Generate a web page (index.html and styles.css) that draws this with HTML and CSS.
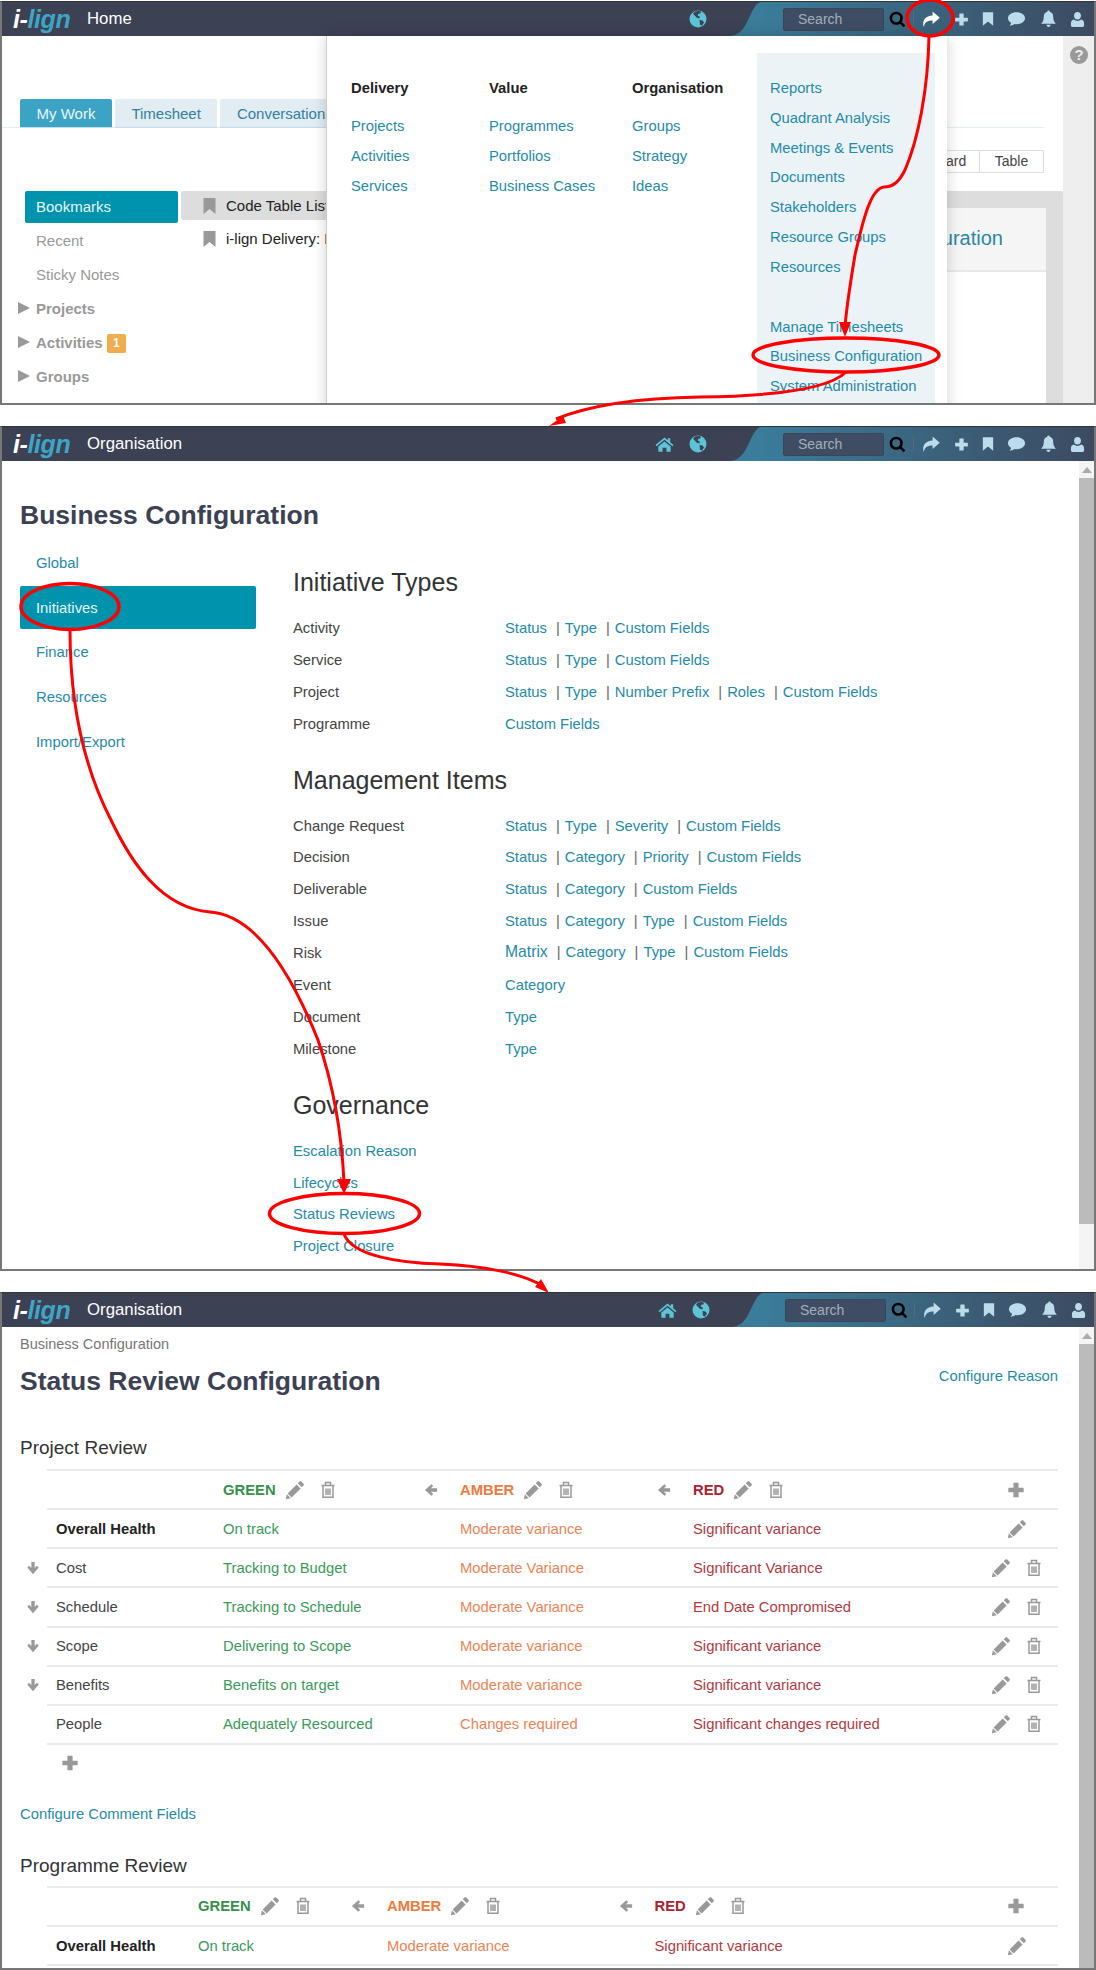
FILE: index.html
```html
<!DOCTYPE html>
<html lang="en">
<head>
  <meta charset="UTF-8">
  <meta name="viewport" content="width=device-width, initial-scale=1.0">
  <title>i-lign Status Review Configuration</title>
  <link rel="stylesheet" href="styles.css">
</head>
<body>
  <svg class="icon-defs" aria-hidden="true">
    <symbol id="i-pencil" viewBox="0 0 16 16"><path d="M11.600 1.200c.4-.4 1-.4 1.400 0l1.800 1.800c.4.4.4 1 0 1.400L13.400 5.800 10.200 2.600zM9.300 3.500l3.200 3.200-7.200 7.200-3.200-3.200zM1.500 11.400l3.100 3.100-3.900.8z"/></symbol>
    <symbol id="i-trash" viewBox="0 0 16 18"><path fill="none" stroke="currentColor" stroke-width="1.500" d="M1.500 4.500h13M5.500 4.500V1.500h5v3M3 4.500V16.300h10V4.500M6 7.500v6.500M8 7.500v6.500M10 7.500v6.500"/></symbol>
    <symbol id="i-left" viewBox="0 0 16 16"><path d="M8.500 1.500 1 8l7.500 6.500 2-2-2.600-2.600H15V6.100H7.900l2.600-2.600z"/></symbol>
    <symbol id="i-down" viewBox="0 0 16 16"><path d="M1.500 7.500 8 15l6.500-7.500-2-2-2.600 2.600V1H6.100v7.100L3.500 5.500z"/></symbol>
    <symbol id="i-plus" viewBox="0 0 16 16"><path d="M6.200 1.500h3.600c.3 0 .5.2.5.5v4h4c.3 0 .5.2.5.5v3c0 .3-.2.500-.5.500h-4v4c0 .3-.2.500-.5.500H6.200c-.3 0-.5-.2-.5-.5v-4h-4c-.3 0-.5-.2-.5-.5v-3c0-.3.2-.5.500-.5h4V2c0-.3.2-.5.500-.5z"/></symbol>
    <symbol id="i-share" viewBox="0 0 18 16"><path d="M11 .5l6.800 5.800L11 12.300V8.900c-4.500 0-7.200 1-8.500 6.300C.7 8.700 4.500 4.300 11 4.100z"/></symbol>
    <symbol id="i-bookmark" viewBox="0 0 14 18"><path d="M1 1h12v16l-6-5-6 5z"/></symbol>
    <symbol id="i-comment" viewBox="0 0 20 16"><path d="M10 1c5 0 9 2.700 9 6.200s-4 6.200-9 6.200c-.8 0-1.500-.1-2.200-.2C6.300 14.400 4.500 15 2.800 15c.8-.9 1.400-1.800 1.500-3C2.300 10.900 1 9.200 1 7.200 1 3.700 5 1 10 1z"/></symbol>
    <symbol id="i-bell" viewBox="0 0 18 18"><path d="M9 0c.8 0 1.300.6 1.300 1.300 2.500.6 3.700 2.600 3.700 5.400 0 4 1.200 5.500 2.800 7.300H1.200C2.800 12.200 4 10.700 4 6.700c0-2.800 1.200-4.800 3.700-5.400C7.700.6 8.200 0 9 0zM6.800 15h4.400c0 1.300-1 2.400-2.200 2.400S6.800 16.300 6.800 15z"/></symbol>
    <symbol id="i-user" viewBox="0 0 16 18"><path d="M8 1c2.200 0 3.700 1.700 3.700 3.900S10.200 9 8 9 4.300 7.100 4.300 4.900 5.800 1 8 1zM4.200 9c1 .9 2.300 1.500 3.800 1.500S10.800 9.900 11.800 9c2 .3 3.200 1.600 3.200 4v2.500c0 .8-.6 1.500-1.500 1.500h-11c-.9 0-1.500-.7-1.500-1.500V13c0-2.400 1.200-3.700 3.200-4z"/></symbol>
    <symbol id="i-home" viewBox="0 0 20 17"><path d="M10 1l3.500 3V2h2.500v4.200L19.500 9l-1.200 1.300L10 3.500 1.700 10.300.5 9zM10 5.300l6.500 5.400V16h-4.500v-4H8v4H3.500v-5.300z"/></symbol>
    <symbol id="i-globe" viewBox="0 0 18 18"><circle cx="9" cy="9" r="8.500" fill="#5cc4d6"/><path fill="#3c4154" d="M6 1.500c2-.9 5-.8 6 .3l-.7 1.700-2 .2-.6 1.800 2.200 1.300-.6 1.700-2.400-.8-2.300-2.300L4 3.500zM10.500 10l3 .5 1.500 2-2 3-2-.8z"/></symbol>
    <symbol id="i-search" viewBox="0 0 16 16"><path fill="none" stroke="currentColor" stroke-width="2.400" d="M6.800 1.800a5 5 0 1 0 0 10 5 5 0 0 0 0-10zM10.500 10.500l4 4"/></symbol>
  </svg>

  <!-- Step 1: home page with the go-to menu open -->
  <section class="shot shot-home">
    <header class="nav">
      <a class="logo" href="#"><span class="logo-i">i-</span><span class="logo-lign">lign</span></a>
      <span class="nav-title">Home</span>
      <svg class="nav-link"><use href="#i-globe"/></svg>
      <svg class="nav-curve" viewBox="0 0 33 34" preserveAspectRatio="none"><path d="M0 34c12 0 16-8 20-16S28 0 33 0v34z"/></svg>
      <div class="nav-tools">
        <div class="search-box">Search</div>
        <svg class="search-icon"><use href="#i-search"/></svg>
        <span class="nav-sep"></span>
        <svg class="tool tool-share tool-current"><use href="#i-share"/></svg>
        <svg class="tool tool-plus"><use href="#i-plus"/></svg>
        <svg class="tool tool-bookmark"><use href="#i-bookmark"/></svg>
        <svg class="tool tool-comment"><use href="#i-comment"/></svg>
        <svg class="tool tool-bell"><use href="#i-bell"/></svg>
        <svg class="tool tool-user"><use href="#i-user"/></svg>
      </div>
    </header>
    <div class="home-body">
      <div class="home-main">
        <div class="tabs">
          <a class="tab tab-active" href="#">My Work</a>
          <a class="tab" href="#">Timesheet</a>
          <a class="tab" href="#">Conversations</a>
        </div>
        <div class="view-switch">
          <a class="view-btn" href="#">Board</a>
          <a class="view-btn" href="#">Table</a>
        </div>
        <div class="home-board">
          <nav class="home-side">
            <a class="home-side-item home-side-active" href="#">Bookmarks</a>
            <a class="home-side-item" href="#">Recent</a>
            <a class="home-side-item" href="#">Sticky Notes</a>
            <a class="home-side-item home-side-group" href="#">Projects</a>
            <a class="home-side-item home-side-group" href="#">Activities <span class="badge">1</span></a>
            <a class="home-side-item home-side-group" href="#">Groups</a>
          </nav>
          <div class="bookmarks">
            <div class="bookmark bookmark-active"><svg class="bookmark-icon"><use href="#i-bookmark"/></svg>Code Table List</div>
            <div class="bookmark"><svg class="bookmark-icon"><use href="#i-bookmark"/></svg>i-lign Delivery: New</div>
          </div>
          <div class="card">
            <div class="card-head">Business Configuration</div>
          </div>
        </div>
      </div>
      <aside class="help-strip"><span class="help">?</span></aside>
    </div>

    <div class="menu">
      <div class="menu-col menu-col-delivery">
        <h4>Delivery</h4>
        <a href="#">Projects</a>
        <a href="#">Activities</a>
        <a href="#">Services</a>
      </div>
      <div class="menu-col menu-col-value">
        <h4>Value</h4>
        <a href="#">Programmes</a>
        <a href="#">Portfolios</a>
        <a href="#">Business Cases</a>
      </div>
      <div class="menu-col menu-col-org">
        <h4>Organisation</h4>
        <a href="#">Groups</a>
        <a href="#">Strategy</a>
        <a href="#">Ideas</a>
      </div>
      <div class="menu-extra">
        <a href="#">Reports</a>
        <a href="#">Quadrant Analysis</a>
        <a href="#">Meetings &amp; Events</a>
        <a href="#">Documents</a>
        <a href="#">Stakeholders</a>
        <a href="#">Resource Groups</a>
        <a href="#">Resources</a>
        <a class="menu-extra-gap" href="#">Manage Timesheets</a>
        <a href="#">Business Configuration</a>
        <a href="#">System Administration</a>
      </div>
    </div>
  </section>

  <!-- Step 2: business configuration -->
  <section class="shot shot-config">
    <header class="nav">
      <a class="logo" href="#"><span class="logo-i">i-</span><span class="logo-lign">lign</span></a>
      <span class="nav-title">Organisation</span>
      <svg class="nav-link nav-home"><use href="#i-home"/></svg>
      <svg class="nav-link"><use href="#i-globe"/></svg>
      <svg class="nav-curve" viewBox="0 0 33 34" preserveAspectRatio="none"><path d="M0 34c12 0 16-8 20-16S28 0 33 0v34z"/></svg>
      <div class="nav-tools">
        <div class="search-box">Search</div>
        <svg class="search-icon"><use href="#i-search"/></svg>
        <span class="nav-sep"></span>
        <svg class="tool tool-share"><use href="#i-share"/></svg>
        <svg class="tool tool-plus"><use href="#i-plus"/></svg>
        <svg class="tool tool-bookmark"><use href="#i-bookmark"/></svg>
        <svg class="tool tool-comment"><use href="#i-comment"/></svg>
        <svg class="tool tool-bell"><use href="#i-bell"/></svg>
        <svg class="tool tool-user"><use href="#i-user"/></svg>
      </div>
    </header>
    <div class="page">
      <div class="page-main config-main">
        <h1>Business Configuration</h1>
        <div class="config-layout">
          <nav class="config-side">
            <a href="#">Global</a>
            <a class="config-side-active" href="#">Initiatives</a>
            <a href="#">Finance</a>
            <a href="#">Resources</a>
            <a href="#">Import/Export</a>
          </nav>
          <div class="config-content">
            <h2>Initiative Types</h2>
            <div class="type-row"><span class="type-name">Activity</span><span><a href="#">Status</a><span class="sep">|</span><a href="#">Type</a><span class="sep">|</span><a href="#">Custom Fields</a></span></div>
            <div class="type-row"><span class="type-name">Service</span><span><a href="#">Status</a><span class="sep">|</span><a href="#">Type</a><span class="sep">|</span><a href="#">Custom Fields</a></span></div>
            <div class="type-row"><span class="type-name">Project</span><span><a href="#">Status</a><span class="sep">|</span><a href="#">Type</a><span class="sep">|</span><a href="#">Number Prefix</a><span class="sep">|</span><a href="#">Roles</a><span class="sep">|</span><a href="#">Custom Fields</a></span></div>
            <div class="type-row"><span class="type-name">Programme</span><span><a href="#">Custom Fields</a></span></div>

            <h2>Management Items</h2>
            <div class="type-row"><span class="type-name">Change Request</span><span><a href="#">Status</a><span class="sep">|</span><a href="#">Type</a><span class="sep">|</span><a href="#">Severity</a><span class="sep">|</span><a href="#">Custom Fields</a></span></div>
            <div class="type-row"><span class="type-name">Decision</span><span><a href="#">Status</a><span class="sep">|</span><a href="#">Category</a><span class="sep">|</span><a href="#">Priority</a><span class="sep">|</span><a href="#">Custom Fields</a></span></div>
            <div class="type-row"><span class="type-name">Deliverable</span><span><a href="#">Status</a><span class="sep">|</span><a href="#">Category</a><span class="sep">|</span><a href="#">Custom Fields</a></span></div>
            <div class="type-row"><span class="type-name">Issue</span><span><a href="#">Status</a><span class="sep">|</span><a href="#">Category</a><span class="sep">|</span><a href="#">Type</a><span class="sep">|</span><a href="#">Custom Fields</a></span></div>
            <div class="type-row"><span class="type-name">Risk</span><span class="type-links-risk"><a class="matrix" href="#">Matrix</a><span class="sep">|</span><a href="#">Category</a><span class="sep">|</span><a href="#">Type</a><span class="sep">|</span><a href="#">Custom Fields</a></span></div>
            <div class="type-row"><span class="type-name">Event</span><span><a href="#">Category</a></span></div>
            <div class="type-row"><span class="type-name">Document</span><span><a href="#">Type</a></span></div>
            <div class="type-row"><span class="type-name">Milestone</span><span><a href="#">Type</a></span></div>

            <h2>Governance</h2>
            <div class="type-row"><a href="#">Escalation Reason</a></div>
            <div class="type-row"><a href="#">Lifecycles</a></div>
            <div class="type-row"><a href="#">Status Reviews</a></div>
            <div class="type-row"><a href="#">Project Closure</a></div>
          </div>
        </div>
      </div>
      <div class="scrollbar scrollbar-short"><span class="scroll-up"></span><span class="scroll-thumb"></span></div>
    </div>
  </section>

  <!-- Step 3: status review configuration -->
  <section class="shot shot-review">
    <header class="nav">
      <a class="logo" href="#"><span class="logo-i">i-</span><span class="logo-lign">lign</span></a>
      <span class="nav-title">Organisation</span>
      <svg class="nav-link nav-home"><use href="#i-home"/></svg>
      <svg class="nav-link"><use href="#i-globe"/></svg>
      <svg class="nav-curve" viewBox="0 0 33 34" preserveAspectRatio="none"><path d="M0 34c12 0 16-8 20-16S28 0 33 0v34z"/></svg>
      <div class="nav-tools">
        <div class="search-box">Search</div>
        <svg class="search-icon"><use href="#i-search"/></svg>
        <span class="nav-sep"></span>
        <svg class="tool tool-share"><use href="#i-share"/></svg>
        <svg class="tool tool-plus"><use href="#i-plus"/></svg>
        <svg class="tool tool-bookmark"><use href="#i-bookmark"/></svg>
        <svg class="tool tool-comment"><use href="#i-comment"/></svg>
        <svg class="tool tool-bell"><use href="#i-bell"/></svg>
        <svg class="tool tool-user"><use href="#i-user"/></svg>
      </div>
    </header>
    <div class="page">
      <div class="page-main review-main">
        <div class="breadcrumb">Business Configuration</div>
        <div class="review-head">
          <h1>Status Review Configuration</h1>
          <a href="#">Configure Reason</a>
        </div>

        <h3>Project Review</h3>
        <div class="review-table">
          <div class="review-row review-row-head">
            <span></span>
            <span class="head-cell green"><b>GREEN</b><svg class="ico pencil"><use href="#i-pencil"/></svg><svg class="ico trash"><use href="#i-trash"/></svg><svg class="ico arrow-left"><use href="#i-left"/></svg></span>
            <span class="head-cell amber"><b>AMBER</b><svg class="ico pencil"><use href="#i-pencil"/></svg><svg class="ico trash"><use href="#i-trash"/></svg><svg class="ico arrow-left"><use href="#i-left"/></svg></span>
            <span class="head-cell red"><b>RED</b><svg class="ico pencil"><use href="#i-pencil"/></svg><svg class="ico trash"><use href="#i-trash"/></svg></span>
            <span class="actions actions-single"><svg class="ico plus"><use href="#i-plus"/></svg></span>
          </div>
          <div class="review-row">
            <b class="row-name">Overall Health</b><span class="green">On track</span><span class="amber">Moderate variance</span><span class="red">Significant variance</span>
            <span class="actions actions-single"><svg class="ico pencil"><use href="#i-pencil"/></svg></span>
          </div>
          <div class="review-row">
            <span class="row-name"><svg class="ico arrow-down"><use href="#i-down"/></svg>Cost</span><span class="green">Tracking to Budget</span><span class="amber">Moderate Variance</span><span class="red">Significant Variance</span>
            <span class="actions"><svg class="ico pencil"><use href="#i-pencil"/></svg><svg class="ico trash"><use href="#i-trash"/></svg></span>
          </div>
          <div class="review-row">
            <span class="row-name"><svg class="ico arrow-down"><use href="#i-down"/></svg>Schedule</span><span class="green">Tracking to Schedule</span><span class="amber">Moderate Variance</span><span class="red">End Date Compromised</span>
            <span class="actions"><svg class="ico pencil"><use href="#i-pencil"/></svg><svg class="ico trash"><use href="#i-trash"/></svg></span>
          </div>
          <div class="review-row">
            <span class="row-name"><svg class="ico arrow-down"><use href="#i-down"/></svg>Scope</span><span class="green">Delivering to Scope</span><span class="amber">Moderate variance</span><span class="red">Significant variance</span>
            <span class="actions"><svg class="ico pencil"><use href="#i-pencil"/></svg><svg class="ico trash"><use href="#i-trash"/></svg></span>
          </div>
          <div class="review-row">
            <span class="row-name"><svg class="ico arrow-down"><use href="#i-down"/></svg>Benefits</span><span class="green">Benefits on target</span><span class="amber">Moderate variance</span><span class="red">Significant variance</span>
            <span class="actions"><svg class="ico pencil"><use href="#i-pencil"/></svg><svg class="ico trash"><use href="#i-trash"/></svg></span>
          </div>
          <div class="review-row review-row-last">
            <span class="row-name">People</span><span class="green">Adequately Resourced</span><span class="amber">Changes required</span><span class="red">Significant changes required</span>
            <span class="actions"><svg class="ico pencil"><use href="#i-pencil"/></svg><svg class="ico trash"><use href="#i-trash"/></svg></span>
          </div>
        </div>
        <svg class="ico plus add-row"><use href="#i-plus"/></svg>
        <a class="comment-link" href="#">Configure Comment Fields</a>

        <h3 class="programme-title">Programme Review</h3>
        <div class="review-table review-programme">
          <div class="review-row review-row-head">
            <span></span>
            <span class="head-cell green"><b>GREEN</b><svg class="ico pencil"><use href="#i-pencil"/></svg><svg class="ico trash"><use href="#i-trash"/></svg><svg class="ico arrow-left"><use href="#i-left"/></svg></span>
            <span class="head-cell amber"><b>AMBER</b><svg class="ico pencil"><use href="#i-pencil"/></svg><svg class="ico trash"><use href="#i-trash"/></svg><svg class="ico arrow-left"><use href="#i-left"/></svg></span>
            <span class="head-cell red"><b>RED</b><svg class="ico pencil"><use href="#i-pencil"/></svg><svg class="ico trash"><use href="#i-trash"/></svg></span>
            <span class="actions actions-single"><svg class="ico plus"><use href="#i-plus"/></svg></span>
          </div>
          <div class="review-row review-row-last">
            <b class="row-name">Overall Health</b><span class="green">On track</span><span class="amber">Moderate variance</span><span class="red">Significant variance</span>
            <span class="actions actions-single"><svg class="ico pencil"><use href="#i-pencil"/></svg></span>
          </div>
        </div>
      </div>
      <div class="scrollbar"><span class="scroll-up"></span><span class="scroll-thumb"></span></div>
    </div>
  </section>

  <!-- Red hand-drawn callouts over the three screens -->
  <svg class="callouts" viewBox="0 0 1096 1970" aria-hidden="true">
    <g class="callout-line">
      <ellipse class="callout-ring" cx="930" cy="18" rx="23" ry="18"/>
      <path d="M929 36C928 90 918 140 905 170 899 182 893 187 884 187 870 188 862 225 855 255 850 285 846 310 845 328"/>
      <ellipse class="callout-ring" cx="846" cy="355" rx="93" ry="17"/>
      <path d="M846 372C830 388 780 396 700 397 640 398 590 405 556 419"/>
      <ellipse class="callout-ring" cx="70" cy="606.500" rx="49" ry="23"/>
      <path d="M70 630C70 690 80 760 111 820 130 860 160 908 210 912 255 915 290 970 318 1040 335 1090 342 1140 344 1182"/>
      <ellipse class="callout-ring" cx="344.500" cy="1213.500" rx="75" ry="20"/>
      <path d="M344 1234C352 1256 400 1263 440 1264 490 1266 525 1275 543 1286"/>
    </g>
    <g class="callout-head">
      <polygon points="845,337 839,322 851,322"/>
      <polygon points="549,426 563,416 566,423"/>
      <polygon points="344,1194 337,1179 351,1179"/>
      <polygon points="549,1293 535,1287 541,1279"/>
    </g>
  </svg>
</body>
</html>
```

FILE: styles.css
```css
* {
  box-sizing: border-box;
}
body {
  position: relative;
  width: 1096px;
  height: 1970px;
  margin: 0;
  padding-top: 1px;
  overflow: hidden;
  background: #fff;
  font-family: "Liberation Sans", Arial, sans-serif;
  font-size: 14.800px;
  color: #444;
}
a {
  color: #1f8ba8;
  text-decoration: none;
}
h1, h2, h3, h4 {
  margin: 0;
}
.icon-defs {
  display: none;
}

/* screens */
.shot {
  position: relative;
  display: flex;
  flex-direction: column;
  overflow: hidden;
  border: 2px solid #777;
  border-top: 1px solid #333;
}
.shot-home {
  height: 404px;
  margin-bottom: 21px;
}
.shot-config {
  height: 845px;
  margin-bottom: 21px;
}
.shot-review {
  height: 678px;
}

/* top bar */
.nav {
  display: flex;
  align-items: center;
  flex: none;
  height: 34px;
  background: #3c4154;
}
.logo {
  width: 74px;
  margin-left: 11px;
  font-size: 25px;
  font-weight: bold;
  font-style: italic;
  letter-spacing: -0.400px;
}
.logo-i {
  color: #fff;
}
.logo-lign {
  color: #3da5c8;
}
.nav-title {
  flex: 1;
  font-size: 16.800px;
  color: #fff;
}
.nav-link {
  flex: none;
  width: 18px;
  height: 18px;
  margin-right: 21px;
}
.nav-home {
  width: 19px;
  height: 17px;
  margin-right: 15px;
  fill: #5cc4d6;
}
.nav-curve {
  flex: none;
  width: 33px;
  height: 34px;
  fill: #3a7c9a;
}
.nav-tools {
  display: flex;
  align-items: center;
  width: 333px;
  height: 34px;
  padding-left: 22px;
  background: linear-gradient(to right, #3a7c9a, #3c4a60);
}
.shot-review .nav-tools {
  width: 331px;
}
.shot-review .nav-link {
  margin-right: 20px;
}
.shot-review .nav-home {
  margin-right: 15px;
}
.shot-review .nav-sep {
  margin: 0 7px 0 6px;
}
.search-box {
  flex: none;
  width: 101px;
  height: 23px;
  padding-left: 14px;
  border: 1px solid #39465a;
  border-radius: 2px;
  background: #3f4d64;
  font-size: 14px;
  line-height: 21px;
  color: #a3adbc;
}
.search-icon {
  flex: none;
  width: 17px;
  height: 17px;
  margin-left: 5px;
  color: #000;
}
.nav-sep {
  flex: none;
  width: 1px;
  height: 16px;
  margin: 0 7px 0 7px;
  background: #56687c;
}
.tool {
  flex: none;
  fill: #bcdcec;
}
.tool-current {
  fill: #fff;
}
.tool-share {
  width: 19px;
  height: 17px;
}
.tool-plus {
  width: 15px;
  height: 15px;
  margin-left: 14px;
}
.tool-bookmark {
  width: 12px;
  height: 16px;
  margin-left: 13px;
}
.tool-comment {
  width: 19px;
  height: 16px;
  margin-left: 13px;
}
.tool-bell {
  width: 17px;
  height: 18px;
  margin-left: 14px;
}
.tool-user {
  width: 15px;
  height: 17px;
  margin-left: 13px;
}

/* home screen */
.home-body {
  display: flex;
  flex: 1;
  min-height: 0;
}
.home-main {
  width: 1061px;
}
.tabs {
  display: flex;
  gap: 3px;
  height: 92px;
  margin-right: 19px;
  padding: 63px 0 0 18px;
  border-bottom: 1px solid #e3eef4;
}
.tab {
  height: 29px;
  padding: 0 16.500px;
  border-bottom: 1px solid #c2dde9;
  border-radius: 2px 2px 0 0;
  background: #e1edf3;
  font-size: 15px;
  line-height: 29px;
  color: #347f9d;
}
.tab-active {
  background: #3ba3c4;
  color: #e9f5f9;
}
.view-switch {
  display: flex;
  justify-content: flex-end;
  height: 23px;
  margin: 22px 19px 0 0;
}
.view-btn {
  width: 64px;
  border: 1px solid #ddd;
  border-left: 0;
  font-size: 14px;
  line-height: 21px;
  text-align: center;
  color: #444;
}
.home-board {
  display: flex;
  margin-top: 18px;
  height: 214px;
}
.home-side {
  flex: none;
  width: 179px;
  padding-left: 23px;
}
.home-side-item {
  position: relative;
  display: block;
  width: 153px;
  height: 34px;
  padding-left: 11px;
  font-size: 15px;
  line-height: 33px;
  color: #999;
}
.home-side-active {
  height: 32px;
  margin-bottom: 1px;
  border-radius: 2px;
  background: #0093ad;
  line-height: 31px;
  color: #e6f5f8;
}
.home-side-group {
  font-weight: bold;
  color: #999;
}
.home-side-group::before {
  content: "";
  position: absolute;
  top: 10px;
  left: -7px;
  border-left: 12px solid #999;
  border-top: 6.500px solid transparent;
  border-bottom: 6.500px solid transparent;
}
.badge {
  display: inline-block;
  width: 19px;
  height: 19px;
  border-radius: 2px;
  background: #f0ad4e;
  font-size: 12px;
  line-height: 19px;
  text-align: center;
  color: #fff;
  vertical-align: 1px;
}
.bookmarks {
  flex: none;
  width: 340px;
}
.bookmark {
  display: flex;
  align-items: center;
  height: 29px;
  margin-bottom: 4px;
  padding-left: 21px;
  font-size: 15px;
  color: #222;
}
.bookmark-active {
  border-radius: 2px;
  background: #ddd;
}
.bookmark-icon {
  flex: none;
  width: 15px;
  height: 18px;
  margin-right: 9px;
  fill: #999;
}
.card {
  flex: 1;
  padding: 17px 17px 0 20px;
  border-radius: 2px;
  background: #ddd;
}
.card-head {
  height: 64px;
  padding-right: 43px;
  border-bottom: 2px solid #e8e8e8;
  background: #f5f5f5;
  font-size: 20px;
  line-height: 60px;
  text-align: right;
  color: #2a86a4;
}
.card::after {
  content: "";
  display: block;
  height: 140px;
  background: #fff;
}
.help-strip {
  flex: 1;
  padding: 10px 0 0 7px;
  background: #eee;
}
.help {
  display: block;
  width: 18px;
  height: 18px;
  border-radius: 50%;
  background: #999;
  font-size: 15px;
  font-weight: bold;
  line-height: 18px;
  text-align: center;
  color: #eee;
}

/* go-to menu, lies over the home screen */
.menu {
  position: absolute;
  top: 34px;
  left: 324px;
  display: flex;
  width: 621px;
  height: 400px;
  padding-left: 24px;
  border-left: 1px solid #ccc;
  background: #fff;
  box-shadow: 0 0 14px rgba(0, 0, 0, 0.18);
}
.menu-col {
  padding-top: 37px;
}
.menu-col-delivery {
  width: 138px;
}
.menu-col-value {
  width: 143px;
}
.menu-col-org {
  width: 125px;
}
.menu-col h4 {
  margin-bottom: 8px;
  font-size: 14.800px;
  line-height: 30px;
  color: #222;
}
.menu-col a,
.menu-extra a {
  display: block;
  width: fit-content;
  font-size: 14.800px;
  line-height: 30px;
}
.menu-extra {
  width: 178px;
  margin-top: 17px;
  padding: 21px 0 0 13px;
  background: #ecf3f7;
}
.menu-extra a {
  line-height: 29.800px;
}
.menu-extra .menu-extra-gap {
  margin-top: 30px;
}

/* shared page frame */
.page {
  display: flex;
  flex: 1;
  min-height: 0;
}
.page-main {
  flex: 1;
  min-width: 0;
  padding-left: 18px;
}
h1 {
  font-size: 26.500px;
  line-height: 32px;
  color: #3c4154;
}
.scrollbar {
  display: flex;
  flex-direction: column;
  flex: none;
  align-items: center;
  width: 15px;
  background: #f4f4f4;
}
.scroll-up {
  flex: none;
  width: 0;
  height: 0;
  margin: 6px 0 5px;
  border-left: 5px solid transparent;
  border-right: 5px solid transparent;
  border-bottom: 6px solid #aaa;
}
.scroll-thumb {
  flex: 1;
  width: 100%;
  background: #bbb;
}
.scrollbar-short {
  padding-bottom: 45px;
}

/* business configuration */
.config-main {
  padding-top: 38px;
}
.config-layout {
  display: flex;
  margin-top: 10px;
}
.config-side {
  flex: none;
  width: 273px;
}
.config-side a {
  display: block;
  width: 236px;
  height: 43px;
  margin-bottom: 1.700px;
  padding-left: 16px;
  border-radius: 2px;
  line-height: 45px;
}
.config-side .config-side-active {
  background: #0093ad;
  color: #e6f5f8;
}
.config-content {
  flex: 1;
  padding-top: 26px;
}
h2 {
  margin: 24px 0 16px;
  font-size: 25px;
  font-weight: normal;
  line-height: 30px;
  color: #333;
}
h2:first-child {
  margin-top: 0;
}
.type-row {
  display: flex;
  height: 31.900px;
  line-height: 31.900px;
}
.type-name {
  flex: none;
  width: 212px;
}
.type-links-risk {
  margin-top: -2px;
}
.sep {
  margin: 0 5px 0 9px;
  color: #666;
}
.matrix {
  font-size: 15.700px;
}

/* status review */
.review-main {
  padding: 8px 21px 0 18px;
}
.breadcrumb {
  font-size: 14.500px;
  line-height: 18px;
  color: #777;
}
.review-head {
  display: flex;
  justify-content: space-between;
  margin-top: 12px;
  line-height: 22px;
}
h3 {
  margin: 39px 0 9px;
  font-size: 19px;
  font-weight: normal;
  line-height: 24px;
  color: #333;
}
.review-table {
  margin-left: 27px;
}
.review-row {
  display: grid;
  grid-template-columns: 176px 237px 233px 1fr 100px;
  align-items: center;
  height: 39.140px;
  border-top: 2px solid #eaeaea;
}
.review-row-last {
  height: 41.140px;
  border-bottom: 2px solid #eaeaea;
}
.review-programme .review-row {
  grid-template-columns: 151px 189px 267.500px 1fr 100px;
}
.row-name {
  display: flex;
  align-items: center;
  padding-left: 9px;
  color: #444;
}
b.row-name {
  color: #222;
}
.green {
  color: #3a9a58;
}
.amber {
  color: #ec8455;
}
.red {
  color: #b23a3e;
}
.head-cell {
  display: flex;
  align-items: center;
  padding-right: 22px;
}
.head-cell b {
  font-size: 14.800px;
}
.head-cell .pencil {
  margin-left: 9px;
}
.head-cell .trash {
  margin-left: 15px;
}
.head-cell.green b {
  color: #34904a;
}
.head-cell.amber b {
  color: #ee7a3c;
}
.head-cell.red b {
  color: #ab2230;
}
.ico {
  flex: none;
  fill: #999;
  color: #999;
}
.pencil {
  width: 20px;
  height: 20px;
}
.trash {
  width: 16px;
  height: 18px;
}
.plus {
  width: 18px;
  height: 18px;
}
.arrow-left {
  width: 14px;
  height: 14px;
  margin-left: auto;
}
.arrow-down {
  width: 14px;
  height: 14px;
  margin: 0 16px 0 -30px;
}
.actions {
  display: flex;
  align-items: center;
  gap: 15px;
  padding-left: 33px;
}
.actions-single {
  padding-left: 49px;
}
.add-row {
  display: block;
  margin: 9px 0 0 41px;
}
.comment-link {
  display: block;
  margin-top: 32px;
  line-height: 20px;
}
.programme-title {
  margin: 30px 0 8px;
}

/* callouts */
.callouts {
  position: absolute;
  top: 0;
  left: 0;
  width: 1096px;
  height: 1970px;
  pointer-events: none;
}
.callout-line {
  fill: none;
  stroke: #f00;
  stroke-width: 3;
}
.callout-ring {
  stroke-width: 3.500;
}
.callout-head {
  fill: #f00;
}
```
